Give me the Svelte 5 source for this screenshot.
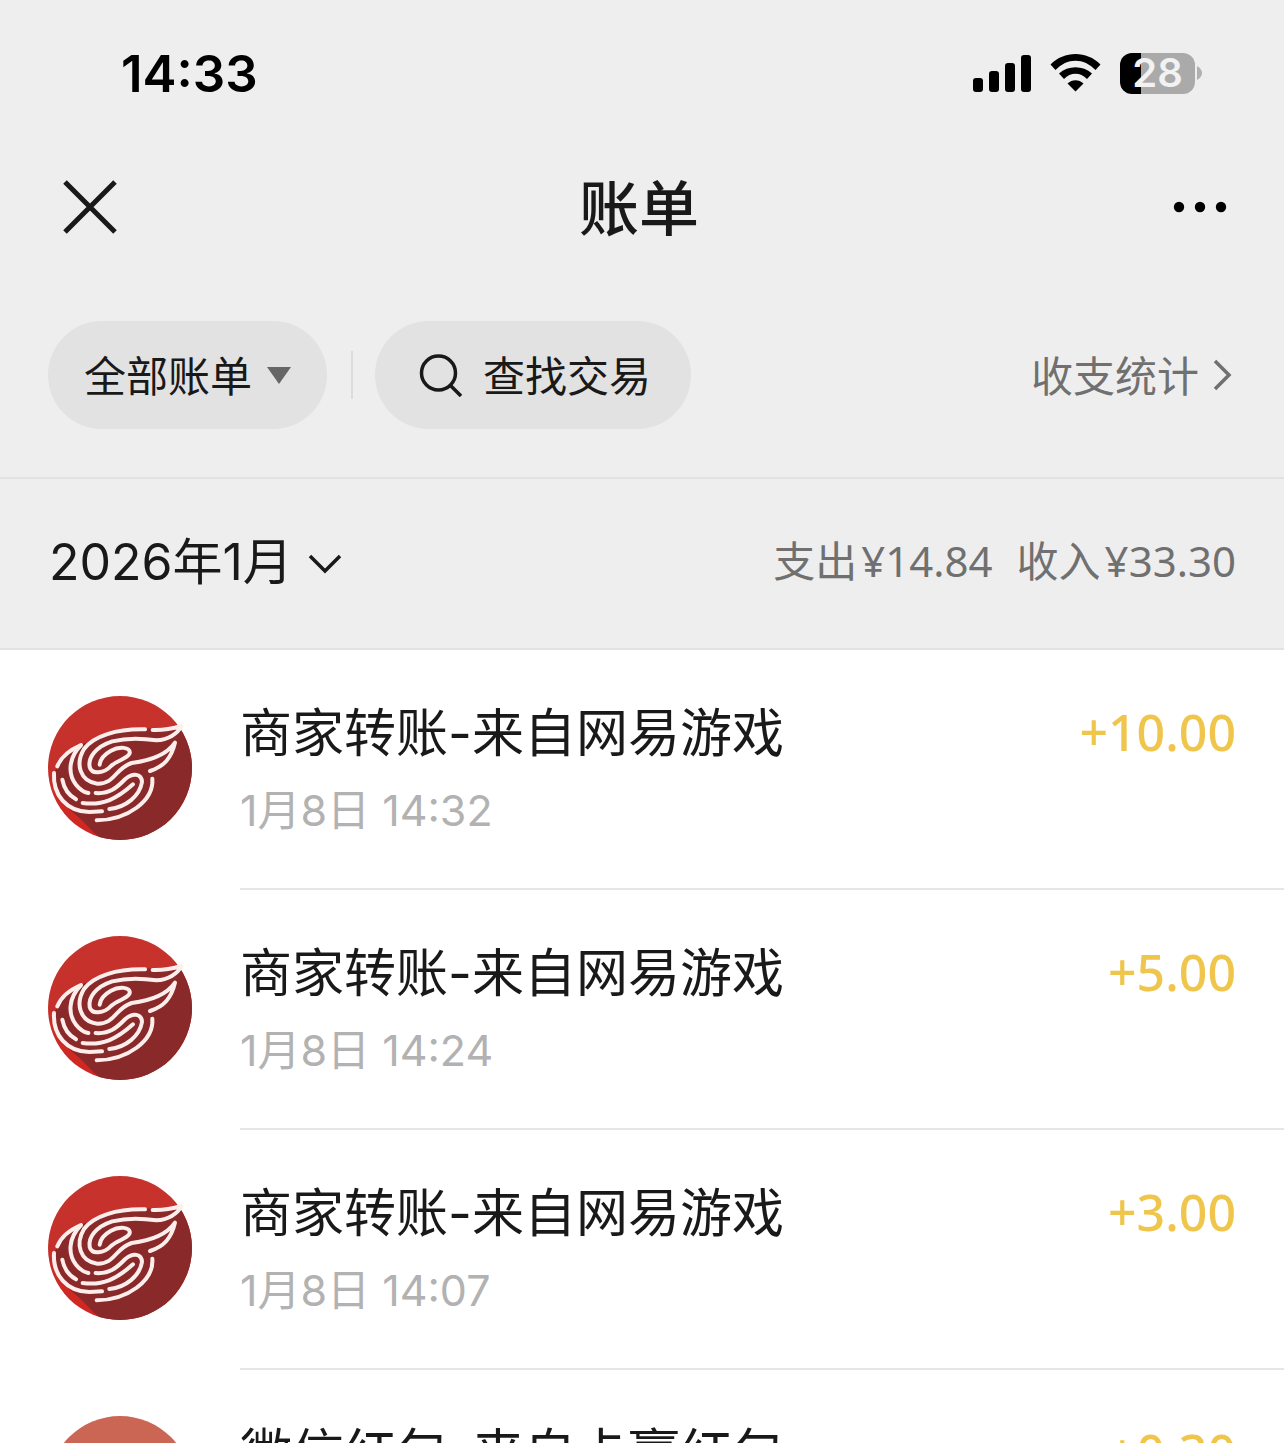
<script>
  const rows = [
    { title: '商家转账-来自网易游戏', time: '1月8日 14:32', amount: '+10.00', kind: 'game' },
    { title: '商家转账-来自网易游戏', time: '1月8日 14:24', amount: '+5.00', kind: 'game' },
    { title: '商家转账-来自网易游戏', time: '1月8日 14:07', amount: '+3.00', kind: 'game' },
    { title: '微信红包-来自卡赢红包', time: '1月8日 13:52', amount: '+0.30', kind: 'packet' }
  ];
</script>

<div class="app">
  <header>
    <div class="status">
      <span class="clock">14:33</span>
      <div class="indicators">
        <svg width="58" height="37" viewBox="0 0 58 37" aria-hidden="true">
          <rect x="0" y="23" width="10" height="14" rx="3" />
          <rect x="16" y="16" width="10" height="21" rx="3" />
          <rect x="32" y="8" width="10" height="29" rx="3" />
          <rect x="48" y="0" width="10" height="37" rx="3" />
        </svg>
        <svg class="wifi" width="51" height="38" viewBox="0 0 51 38" aria-hidden="true">
          <path d="M.5 10.5C14 -3.5 37 -3.5 50.5 10.5L45.5 16C34 3.5 17 3.5 5.5 16Z" />
          <path d="M9 19.5C18 11 33 11 42 19.5L37 25C30.500 18 20.500 18 14 25Z" />
          <path d="M17.500 29.500C22 25 29 25 33.500 29.500L25.500 37.500Z" />
        </svg>
        <div class="battery"><span class="level">28</span></div>
        <svg class="tip" width="5" height="14" viewBox="0 0 5 14" aria-hidden="true"><path d="M0 0Q5 3 5 7T0 14Z" fill="#b0b0b0" /></svg>
      </div>
    </div>

    <div class="navbar">
      <button aria-label="关闭">
        <svg width="54" height="54" viewBox="0 0 54 54" aria-hidden="true"><path d="M2 2 52 52M52 2 2 52" fill="none" stroke="#191919" stroke-width="5" /></svg>
      </button>
      <h1>账单</h1>
      <button class="more" aria-label="更多">
        <svg width="54" height="12" viewBox="0 0 54 12" aria-hidden="true"><circle cx="6" cy="6" r="5.2" /><circle cx="27" cy="6" r="5.2" /><circle cx="48" cy="6" r="5.2" /></svg>
      </button>
    </div>

    <div class="filters">
      <button class="pill all"><span class="label">全部账单</span>
        <svg width="24" height="17" viewBox="0 0 24 17" aria-hidden="true"><path d="M0 0H24L12 17Z" fill="#666" /></svg>
      </button>
      <span class="bar"></span>
      <button class="pill search">
        <svg width="44" height="44" viewBox="0 0 44 44" aria-hidden="true"><g fill="none" stroke="#191919" stroke-width="3.5"><circle cx="19.5" cy="20" r="17" /><path d="M31 32 42 43" /></g></svg>
        <span class="label">查找交易</span>
      </button>
      <a class="stats" href="#stats"><span class="label">收支统计</span>
        <svg width="19" height="32" viewBox="0 0 19 32" aria-hidden="true"><path d="M2 2 16 16 2 30" fill="none" stroke="#707070" stroke-width="3.5" /></svg>
      </a>
    </div>
  </header>

  <section class="month">
    <button class="picker"><span class="date">2026年1月</span>
      <svg width="34" height="20" viewBox="0 0 34 20" aria-hidden="true"><path d="M2 2 17 17 32 2" fill="none" stroke="#191919" stroke-width="3.5" /></svg>
    </button>
    <p class="totals"><span>支出<b>¥14.84</b></span><span>收入<b>¥33.30</b></span></p>
  </section>

  <ul>
    {#each rows as row}
      <li>
        {#if row.kind === 'game'}
          <svg class="avatar" viewBox="24 18 432 432" aria-hidden="true">
            <defs>
              <clipPath id="disc"><circle cx="240" cy="234" r="216" /></clipPath>
              <linearGradient id="red" x1="0" y1="0" x2="0" y2="1"><stop offset="0" stop-color="#c8322c" /><stop offset=".5" stop-color="#c5302b" /><stop offset="1" stop-color="#d8221f" /></linearGradient>
            </defs>
            <g clip-path="url(#disc)">
              <path d="M0 0H480V480H0Z" fill="url(#red)" />
              <path d="M42 250 60 215 122 165 190 135 250 120 415 110 480 150V470H210L160 426 125 390 62 335Z" fill="#8a2929" />
            </g>
            <g fill="none" stroke="#fdeeec" stroke-width="12" stroke-linecap="round" stroke-linejoin="round">
              <path d="M315 118C230 116 160 138 132 177C105 222 120 275 172 281C225 282 225 235 275 219C332 212 378 197 405 158C394 205 372 229 330 243" />
              <path d="M338 120C372 121 398 116 424 108C413 132 383 149 349 151C315 146 262 143 217 154C166 170 144 204 149 231C155 255 193 250 213 228C232 210 260 208 269 190C273 170 236 169 213 182C191 194 181 206 179 224" />
              <path d="M52 229C62 203 84 182 123 165C85 204 83 252 108 284C119 298 131 306 145 309" />
              <path d="M167 309C214 313 235 287 256 267C279 247 305 251 306 276C299 318 258 352 208 357" />
              <path d="M128 339C190 347 231 326 279 283" />
              <path d="M67 269C72 296 86 316 108 328" />
              <path d="M42 249C38 315 80 365 148 366L186 364" />
              <path d="M337 266C342 333 262 390 170 391" />
            </g>
          </svg>
        {:else}
          <span class="avatar packet"></span>
        {/if}
        <div class="body">
          <div class="text">
            <span class="title">{row.title}</span>
            <time>{row.time}</time>
          </div>
          <span class="amount">{row.amount}</span>
        </div>
      </li>
    {/each}
  </ul>
</div>

<style>
  :global(body) { margin: 0; background: #fff; }
  .app {
    height: 100vh;
    overflow: hidden;
    color: #191919;
    font-family: Inter, 'Noto Sans CJK SC', sans-serif;
  }
  button {
    display: flex;
    align-items: center;
    margin: 0;
    padding: 0;
    border: 0;
    background: none;
    color: inherit;
    font: inherit;
  }
  svg { display: block; flex: none; }
  header {
    background: #eee;
    border-bottom: 2px solid #e2e2e2;
  }
  .status {
    display: flex;
    align-items: center;
    justify-content: space-between;
    height: 146px;
    padding: 0 82px 0 121px;
  }
  .clock { font-size: 51px; font-weight: 600; color: #000; }
  .indicators { display: flex; align-items: center; }
  .wifi { margin: 0 19px; }
  .battery {
    display: flex;
    align-items: center;
    justify-content: center;
    width: 75px;
    height: 41px;
    border-radius: 12px;
    background: linear-gradient(90deg, #000 21px, #aaa 21px);
  }
  .level { font-size: 40px; font-weight: 600; line-height: 40px; color: #f2f2f2; }
  .tip { margin-left: 2px; }
  .navbar {
    display: grid;
    grid-template-columns: 1fr auto 1fr;
    align-items: center;
    height: 122px;
    padding: 0 57px 0 63px;
  }
  .navbar button { width: 54px; }
  .more { justify-self: end; }
  h1 { margin: 0; padding: 4px 12px 0 0; font-size: 60px; font-weight: 500; line-height: 80px; }
  .filters {
    display: flex;
    align-items: center;
    height: 108px;
    padding: 53px 52px 48px 48px;
    font-size: 42px;
  }
  .label { padding-bottom: 4px; }
  .pill {
    height: 108px;
    border-radius: 54px;
    background: #e2e2e2;
  }
  .all { gap: 15px; padding: 0 36px; }
  .bar { width: 2px; height: 48px; margin: 0 22px 0 24px; background: #dcdcdc; }
  .search { gap: 20px; padding: 0 40px 0 44px; }
  .stats {
    display: flex;
    align-items: center;
    gap: 14px;
    margin-left: auto;
    color: #707070;
    text-decoration: none;
  }
  .month {
    display: flex;
    align-items: center;
    justify-content: space-between;
    height: 169px;
    padding: 0 48px 0 49px;
    border-bottom: 2px solid #e2e2e2;
    background: #eee;
  }
  .picker { gap: 15px; font-size: 50px; }
  .date { padding-bottom: 12px; }
  .totals { display: flex; gap: 24px; margin: 0; padding-bottom: 10px; font-size: 42px; color: #707070; }
  b { padding-left: 4px; font-family: 'Noto Sans', sans-serif; font-weight: 400; }
  ul { margin: 0; padding: 0; list-style: none; }
  li { display: flex; gap: 48px; padding-left: 48px; }
  .avatar { flex: none; width: 144px; height: 144px; margin-top: 46px; }
  .packet { border-radius: 50%; background: #cb6554; }
  .body {
    display: flex;
    flex: 1;
    justify-content: space-between;
    height: 192px;
    padding: 46px 48px 0 0;
    border-bottom: 2px solid #e6e6e6;
  }
  .text { display: flex; flex-direction: column; gap: 8px; padding-top: 2px; }
  .title { font-size: 52px; line-height: 72px; }
  time { font-size: 43px; line-height: 64px; color: #b2b2b2; }
  .amount {
    font-family: 'Noto Sans', sans-serif;
    font-size: 50px;
    font-weight: 500;
    line-height: 72px;
    color: #f0c54c;
  }
</style>
